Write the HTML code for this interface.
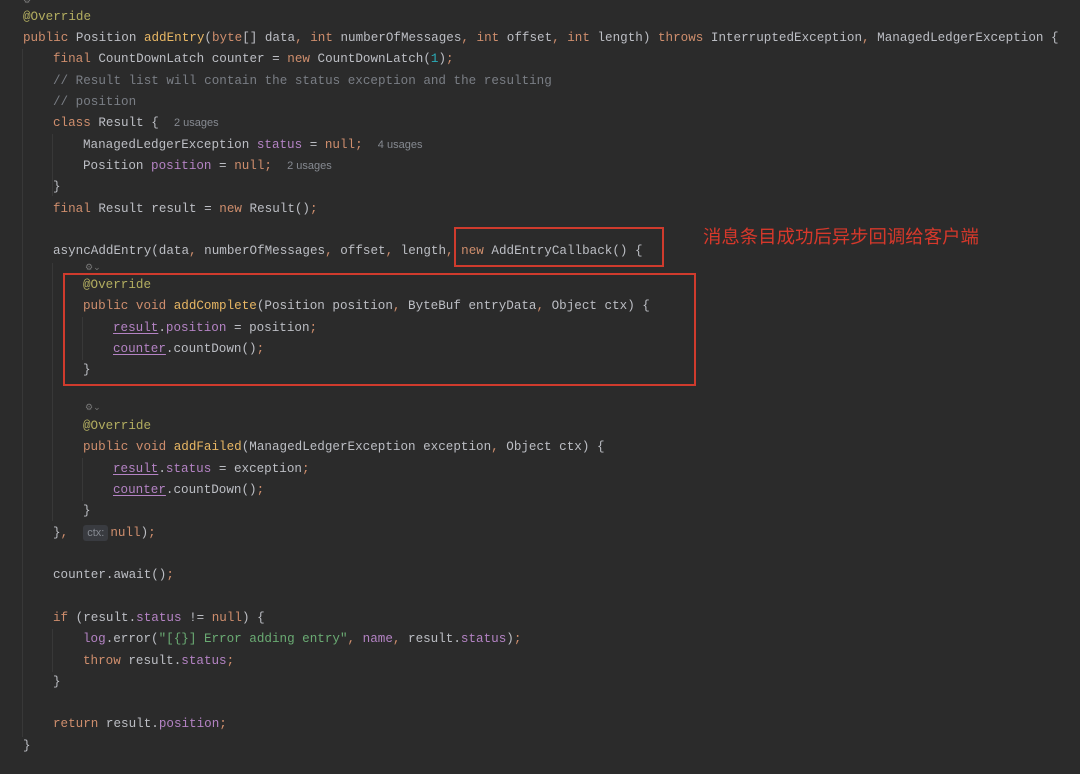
<!DOCTYPE html>
<html><head><meta charset="utf-8"><style>
html,body{margin:0;padding:0;background:#2b2b2b;}
body{width:1080px;height:773px;position:relative;overflow:hidden;font-family:"Liberation Mono",monospace;font-size:12.6px;color:#bcbec4;}
#w{position:absolute;left:0;top:1px;width:1080px;height:773px}
.l{position:absolute;height:20px;line-height:20px;white-space:pre;}
.k{color:#cf8e6d}.a{color:#b3ae60}.m{color:#e8b764}.f{color:#b483c4}.c{color:#7a7e85}.n{color:#2aacb8}.s{color:#6aab73}
.u{text-decoration:underline;text-underline-offset:2px}
.h{font-family:"Liberation Sans",sans-serif;font-size:11px;color:#868a91}
.ctx{font-family:"Liberation Sans",sans-serif;font-size:11px;color:#868a91;background:#393b40;border-radius:3px;padding:2px 4px;margin-right:2px}
.box{position:absolute;border:2px solid #cf3b2d}
.g{position:absolute;width:1px;background:#383838}
.hint{position:absolute;font-size:9px;color:#777;font-family:"Liberation Sans",sans-serif}
</style></head><body><div id="w">
<div class="g" style="left:22px;top:48px;height:688px"></div>
<div class="g" style="left:52px;top:133px;height:62px"></div>
<div class="g" style="left:52px;top:262px;height:258px"></div>
<div class="g" style="left:82px;top:316px;height:43px"></div>
<div class="g" style="left:82px;top:457px;height:43px"></div>
<div class="g" style="left:52px;top:628px;height:43px"></div>

<div class="hint" style="left:23px;top:-6px">⚙</div>
<div class="l" style="left:23px;top:6px"><span class="a">@Override</span></div>
<div class="l" style="left:23px;top:27px"><span class="k">public</span> Position <span class="m">addEntry</span>(<span class="k">byte</span>[] data<span class="k">,</span> <span class="k">int</span> numberOfMessages<span class="k">,</span> <span class="k">int</span> offset<span class="k">,</span> <span class="k">int</span> length) <span class="k">throws</span> InterruptedException<span class="k">,</span> ManagedLedgerException {</div>
<div class="l" style="left:53px;top:48px"><span class="k">final</span> CountDownLatch counter = <span class="k">new</span> CountDownLatch(<span class="n">1</span>)<span class="k">;</span></div>
<div class="l c" style="left:53px;top:70px">// Result list will contain the status exception and the resulting</div>
<div class="l c" style="left:53px;top:91px">// position</div>
<div class="l" style="left:53px;top:112px"><span class="k">class</span> Result {  <span class="h">2 usages</span></div>
<div class="l" style="left:83px;top:134px">ManagedLedgerException <span class="f">status</span> = <span class="k">null;</span>  <span class="h">4 usages</span></div>
<div class="l" style="left:83px;top:155px">Position <span class="f">position</span> = <span class="k">null;</span>  <span class="h">2 usages</span></div>
<div class="l" style="left:53px;top:176px">}</div>
<div class="l" style="left:53px;top:198px"><span class="k">final</span> Result result = <span class="k">new</span> Result()<span class="k">;</span></div>
<div class="l" style="left:53px;top:240px">asyncAddEntry(data<span class="k">,</span> numberOfMessages<span class="k">,</span> offset<span class="k">,</span> length<span class="k">,</span> <span class="k">new</span> AddEntryCallback() {</div>
<div class="hint" style="left:85px;top:261px">⚙⌄</div>
<div class="l" style="left:83px;top:274px"><span class="a">@Override</span></div>
<div class="l" style="left:83px;top:295px"><span class="k">public void</span> <span class="m">addComplete</span>(Position position<span class="k">,</span> ByteBuf entryData<span class="k">,</span> Object ctx) {</div>
<div class="l" style="left:113px;top:317px"><span class="f u">result</span>.<span class="f">position</span> = position<span class="k">;</span></div>
<div class="l" style="left:113px;top:338px"><span class="f u">counter</span>.countDown()<span class="k">;</span></div>
<div class="l" style="left:83px;top:359px">}</div>
<div class="hint" style="left:85px;top:401px">⚙⌄</div>
<div class="l" style="left:83px;top:415px"><span class="a">@Override</span></div>
<div class="l" style="left:83px;top:436px"><span class="k">public void</span> <span class="m">addFailed</span>(ManagedLedgerException exception<span class="k">,</span> Object ctx) {</div>
<div class="l" style="left:113px;top:458px"><span class="f u">result</span>.<span class="f">status</span> = exception<span class="k">;</span></div>
<div class="l" style="left:113px;top:479px"><span class="f u">counter</span>.countDown()<span class="k">;</span></div>
<div class="l" style="left:83px;top:500px">}</div>
<div class="l" style="left:53px;top:522px">}<span class="k">,</span>  <span class="ctx">ctx:</span><span class="k">null</span>)<span class="k">;</span></div>
<div class="l" style="left:53px;top:564px">counter.await()<span class="k">;</span></div>
<div class="l" style="left:53px;top:607px"><span class="k">if</span> (result.<span class="f">status</span> != <span class="k">null</span>) {</div>
<div class="l" style="left:83px;top:628px"><span class="f">log</span>.error(<span class="s">"[{}] Error adding entry"</span><span class="k">,</span> <span class="f">name</span><span class="k">,</span> result.<span class="f">status</span>)<span class="k">;</span></div>
<div class="l" style="left:83px;top:650px"><span class="k">throw</span> result.<span class="f">status</span><span class="k">;</span></div>
<div class="l" style="left:53px;top:671px">}</div>
<div class="l" style="left:53px;top:713px"><span class="k">return</span> result.<span class="f">position</span><span class="k">;</span></div>
<div class="l" style="left:23px;top:735px">}</div>

<div class="box" style="left:454px;top:226px;width:206px;height:36px"></div>
<div class="box" style="left:63px;top:272px;width:629px;height:109px"></div>
<div style="position:absolute;left:703px;top:222px;font-family:'Liberation Sans','Noto Sans CJK SC',sans-serif;font-size:18.4px;color:#d6382b;white-space:nowrap">消息条目成功后异步回调给客户端</div>
</div></body></html>
